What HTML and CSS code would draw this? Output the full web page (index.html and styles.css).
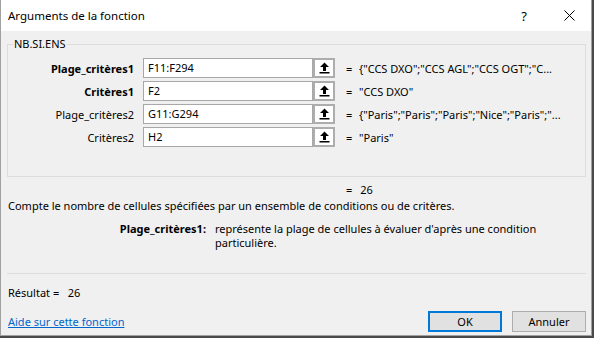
FILE: index.html
```html
<!DOCTYPE html>
<html lang="fr">
<head>
<meta charset="utf-8">
<title>Arguments de la fonction</title>
<link rel="stylesheet" href="styles.css">
</head>
<body>
<div class="window">
  <div class="titlebar">
    <span class="title">Arguments de la fonction</span>
    <span class="tb-btn help">?</span>
    <span class="tb-btn close">
      <svg width="11" height="11" viewBox="0 0 11 11"><path d="M0.5 0.5 L10.5 10.5 M10.5 0.5 L0.5 10.5" stroke="#000" stroke-width="1" fill="none"/></svg>
    </span>
  </div>
  <div class="main">
    <fieldset class="group">
      <legend>NB.SI.ENS</legend>
      <div class="row">
        <span class="label bold">Plage_critères1</span>
        <span class="input">F11:F294</span>
        <span class="pick"><svg width="11" height="12" viewBox="0 0 11 12"><path d="M5.5 0.5 L10 5 L7 5 L7 9 L4 9 L4 5 L1 5 Z" fill="#000"/><rect x="0.5" y="10" width="10" height="1.5" fill="#000"/></svg></span>
        <span class="eq">=</span>
        <span class="value">{"CCS DXO";"CCS AGL";"CCS OGT";"C...</span>
      </div>
      <div class="row">
        <span class="label bold">Critères1</span>
        <span class="input">F2</span>
        <span class="pick"><svg width="11" height="12" viewBox="0 0 11 12"><path d="M5.5 0.5 L10 5 L7 5 L7 9 L4 9 L4 5 L1 5 Z" fill="#000"/><rect x="0.5" y="10" width="10" height="1.5" fill="#000"/></svg></span>
        <span class="eq">=</span>
        <span class="value">"CCS DXO"</span>
      </div>
      <div class="row">
        <span class="label">Plage_critères2</span>
        <span class="input">G11:G294</span>
        <span class="pick"><svg width="11" height="12" viewBox="0 0 11 12"><path d="M5.5 0.5 L10 5 L7 5 L7 9 L4 9 L4 5 L1 5 Z" fill="#000"/><rect x="0.5" y="10" width="10" height="1.5" fill="#000"/></svg></span>
        <span class="eq">=</span>
        <span class="value">{"Paris";"Paris";"Paris";"Nice";"Paris";"...</span>
      </div>
      <div class="row">
        <span class="label">Critères2</span>
        <span class="input">H2</span>
        <span class="pick"><svg width="11" height="12" viewBox="0 0 11 12"><path d="M5.5 0.5 L10 5 L7 5 L7 9 L4 9 L4 5 L1 5 Z" fill="#000"/><rect x="0.5" y="10" width="10" height="1.5" fill="#000"/></svg></span>
        <span class="eq">=</span>
        <span class="value">"Paris"</span>
      </div>
    </fieldset>
    <div class="result-line"><span class="eq">=</span><span class="value">26</span></div>
    <p class="summary">Compte le nombre de cellules spécifiées par un ensemble de conditions ou de critères.</p>
    <div class="desc">
      <span class="desc-label">Plage_critères1:</span>
      <span class="desc-text">représente la plage de cellules à évaluer d'après une condition particulière.</span>
    </div>
    <hr class="sep">
    <div class="resultat">Résultat =&nbsp;&nbsp;&nbsp;26</div>
    <div class="footer">
      <a class="help-link" href="#">Aide sur cette fonction</a>
      <div class="buttons">
        <span class="btn default">OK</span>
        <span class="btn">Annuler</span>
      </div>
    </div>
  </div>
</div>
</body>
</html>
```

FILE: styles.css
```css
* { box-sizing: border-box; }
html, body {
  margin: 0;
  padding: 0;
}
body {
  width: 594px;
  height: 338px;
  background: #4a4a4a;
  font-family: "Noto Sans", "Segoe UI", sans-serif;
  font-size: 11px;
  color: #000;
  overflow: hidden;
}
.window {
  width: 592px;
  height: 336px;
  background: #f0f0f0;
  border: 1px solid #a0a0a0;
  border-top: none;
  display: flex;
  flex-direction: column;
}
.titlebar {
  height: 31px;
  background: #fff;
  display: flex;
  align-items: center;
  padding-left: 7px;
}
.title {
  flex: 1;
  font-size: 11.5px;
}
.tb-btn {
  width: 46px;
  height: 31px;
  display: flex;
  align-items: center;
  justify-content: center;
}
.help { font-size: 13px; }
.close { width: 44px; }
.main {
  padding: 0 5px 0 7px;
  display: flex;
  flex-direction: column;
}
.group {
  margin: 6px 0 0 -1px;
  padding: 7px 0 26px 0;
  border: 1px solid #dcdcdc;
  min-width: 0;
  height: 140px;
}
.group legend {
  margin-left: 5px;
  padding: 0 1px;
  line-height: 14px;
}
.row {
  display: grid;
  grid-template-columns: 135px 170px 22px 24px 1fr;
  height: 20px;
  align-items: center;
  margin-bottom: 3px;
}
.label {
  text-align: right;
  padding-right: 9px;
  white-space: nowrap;
}
.bold { font-weight: bold; }
.input {
  height: 20px;
  background: #fff;
  border: 1px solid #a8a8a8;
  padding-left: 4px;
  line-height: 18px;
}
.pick {
  height: 20px;
  width: 22px;
  border: 2px solid #adadad;
  background: #fff;
  display: flex;
  align-items: center;
  justify-content: center;
}
.eq {
  padding-left: 11px;
}
.value {
  white-space: nowrap;
  overflow: hidden;
}
.result-line {
  display: flex;
  height: 16px;
  line-height: 16px;
  margin-top: 5px;
  padding-left: 327px;
}
.result-line .value { padding-left: 8px; }
.row .value { padding-left: 0; }
.summary {
  margin: 0;
  line-height: 16px;
}
.desc {
  display: flex;
  margin-top: 8px;
  line-height: 14px;
}
.desc-label {
  font-weight: bold;
  width: 198px;
  text-align: right;
  flex: none;
}
.desc-text {
  width: 335px;
  padding-left: 9px;
}
.sep {
  margin: 23px 0 0 -1px;
  border: none;
  border-top: 1px solid #dcdcdc;
  height: 0;
}
.resultat {
  margin-top: 11px;
  line-height: 16px;
}
.footer {
  margin-top: 10px;
  display: flex;
  align-items: center;
  justify-content: space-between;
}
.help-link {
  color: #0066cc;
  text-decoration: underline;
}
.buttons {
  display: flex;
  gap: 10px;
}
.btn {
  width: 74px;
  height: 21px;
  background: #e1e1e1;
  border: 1px solid #adadad;
  display: flex;
  align-items: center;
  justify-content: center;
}
.btn.default {
  border: 2px solid #0078d7;
}
```
